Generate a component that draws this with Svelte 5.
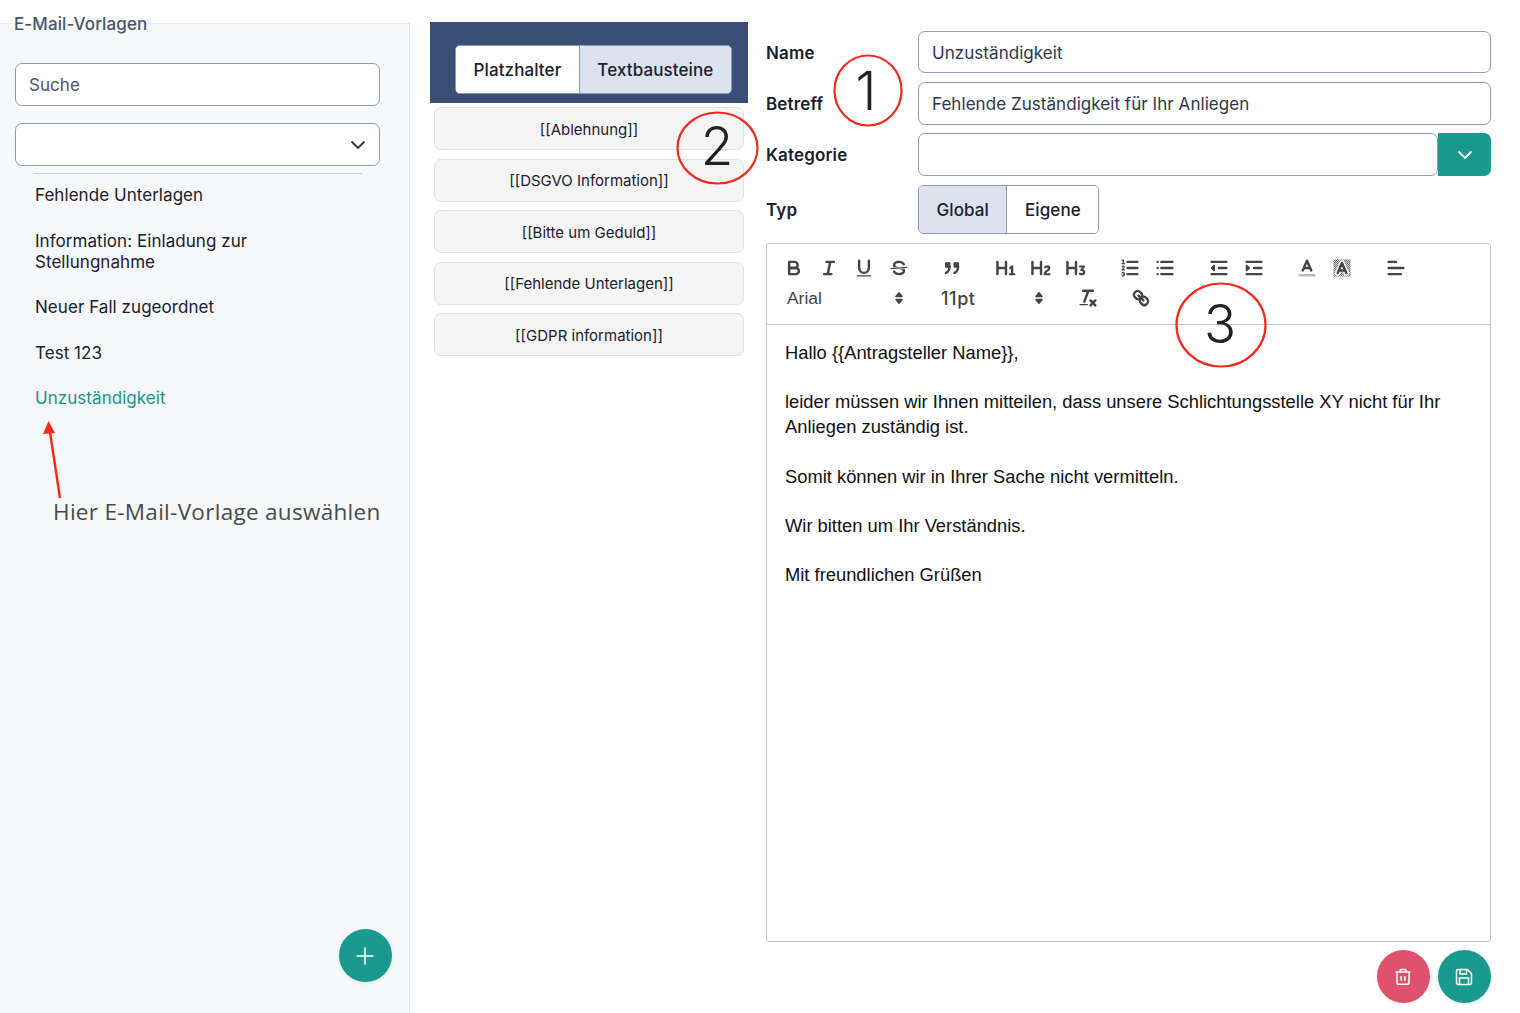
<script lang="ts">
	const templates = [
		'Fehlende Unterlagen',
		'Information: Einladung zur Stellungnahme',
		'Neuer Fall zugeordnet',
		'Test 123',
		'Unzuständigkeit'
	];
	const snippets = [
		'[[Ablehnung]]',
		'[[DSGVO Information]]',
		'[[Bitte um Geduld]]',
		'[[Fehlende Unterlagen]]',
		'[[GDPR information]]'
	];

	let active = $state('Unzuständigkeit');
	let tab = $state('Textbausteine');
	let scope = $state('Global');
</script>

<main class="page">
	<fieldset class="sidebar">
		<legend>E-Mail-Vorlagen</legend>
		<input class="field search" placeholder="Suche" />
		<div class="field select">
			<svg class="chev" viewBox="0 0 16 10" width="16" height="10"><path d="M1.5 1.5 8 8l6.5-6.5" /></svg>
		</div>
		<hr />
		<ul>
			{#each templates as item}
				<li class:active={active === item}>
					<button type="button" onclick={() => (active = item)}>{item}</button>
				</li>
			{/each}
		</ul>
		<button class="fab teal add" type="button" aria-label="Neu">
			<svg viewBox="0 0 20 20" width="20" height="20"><path d="M10 1.5v17M1.5 10h17" /></svg>
		</button>
	</fieldset>

	<section class="middle">
		<div class="tabs-head">
			<div class="segmented">
				{#each ['Platzhalter', 'Textbausteine'] as name}
					<button type="button" class:on={tab === name} onclick={() => (tab = name)}>{name}</button>
				{/each}
			</div>
		</div>
		<div class="snippets">
			{#each snippets as item}
				<button type="button" class="snippet">{item}</button>
			{/each}
		</div>
	</section>

	<section class="detail">
		<div class="form-row"><span class="label">Name</span><input class="field" value="Unzuständigkeit" /></div>
		<div class="form-row tall"><span class="label">Betreff</span><input class="field" value="Fehlende Zuständigkeit für Ihr Anliegen" /></div>
		<div class="form-row tall">
			<span class="label">Kategorie</span>
			<div class="combo">
				<div class="field"></div>
				<button type="button" class="combo-btn" aria-label="Auswahl">
					<svg viewBox="0 0 16 10" width="16" height="10"><path d="M1.5 1.5 8 8l6.5-6.5" /></svg>
				</button>
			</div>
		</div>
		<div class="form-row type">
			<span class="label">Typ</span>
			<div class="segmented small">
				{#each ['Global', 'Eigene'] as name}
					<button type="button" class:on={scope === name} onclick={() => (scope = name)}>{name}</button>
				{/each}
			</div>
		</div>

		<div class="editor">
			<div class="toolbar">
				<div class="tool-row">
					<div class="group">
						<button type="button" aria-label="Fett"><svg viewBox="0 0 18 18"><path d="M5,4H9.5A2.5,2.5,0,0,1,12,6.5v0A2.5,2.5,0,0,1,9.5,9H5V4Z" /><path d="M5,9h5.5A2.5,2.5,0,0,1,13,11.5v0A2.5,2.5,0,0,1,10.5,14H5V9Z" /></svg></button>
						<button type="button" aria-label="Kursiv"><svg viewBox="0 0 18 18"><path d="M7 4h6M5 14h6M8 14l2-10" /></svg></button>
						<button type="button" aria-label="Unterstrichen"><svg viewBox="0 0 18 18"><path d="M5,3V9a4.012,4.012,0,0,0,4,4H9a4.012,4.012,0,0,0,4-4V3" /><rect class="fill" height="1" rx="0.5" width="12" x="3" y="15" /></svg></button>
						<button type="button" aria-label="Durchgestrichen"><svg viewBox="0 0 18 18"><path class="thin" d="M15.5 8.5 2.5 9.5" /><path class="fill" d="M9.007,8C6.542,7.791,6,7.519,6,6.5,6,5.792,7.283,5,9,5c1.571,0,2.765.679,2.969,1.309a1,1,0,0,0,1.9-.617C13.356,4.106,11.354,3,9,3,6.2,3,4,4.538,4,6.5a3.2,3.2,0,0,0,.5,1.843Z" /><path class="fill" d="M8.984,10C11.457,10.208,12,10.479,12,11.5c0,.708-1.283,1.5-3,1.5-1.571,0-2.765-.679-2.969-1.309a1,1,0,1,0-1.9.617C4.644,13.894,6.646,15,9,15c2.8,0,5-1.538,5-3.5a3.2,3.2,0,0,0-.5-1.843Z" /></svg></button>
					</div>
					<div class="group">
						<button type="button" aria-label="Zitat"><svg viewBox="0 0 18 18"><rect class="solid" height="3" width="3" x="4" y="5" /><rect class="solid" height="3" width="3" x="11" y="5" /><path d="M7,8c0,4.031-3,5-3,5" /><path d="M14,8c0,4.031-3,5-3,5" /></svg></button>
					</div>
					<div class="group">
						<button type="button" aria-label="H1"><svg viewBox="0 0 18 18"><path class="fill" d="M10,4V14a1,1,0,0,1-2,0V10H3v4a1,1,0,0,1-2,0V4A1,1,0,0,1,3,4V8H8V4a1,1,0,0,1,2,0Zm6.06787,9.209H14.98975V7.59863a.54085.54085,0,0,0-.605-.60547h-.62744a1.01119,1.01119,0,0,0-.748.29688L11.645,8.56641a.5435.5435,0,0,0-.022.8584l.28613.30762a.53861.53861,0,0,0,.84717.0332l.09912-.08789a1.2137,1.2137,0,0,0,.2417-.35254h.02246s-.01123.30859-.01123.60547V13.209H12.041a.54085.54085,0,0,0-.605.60547v.43945a.54085.54085,0,0,0,.605.60547h4.02686a.54085.54085,0,0,0,.605-.60547v-.43945A.54085.54085,0,0,0,16.06787,13.209Z" /></svg></button>
						<button type="button" aria-label="H2"><svg viewBox="0 0 18 18"><path class="fill" d="M16.73975,13.81445v.43945a.54085.54085,0,0,1-.605.60547H11.855a.58392.58392,0,0,1-.64893-.60547V14.0127c0-2.90527,3.39941-3.42187,3.39941-4.55469a.77675.77675,0,0,0-.84717-.78125,1.17684,1.17684,0,0,0-.83594.38477c-.2749.26367-.561.374-.85791.13184l-.4292-.34082c-.30811-.24219-.38525-.51758-.1543-.81445a2.97155,2.97155,0,0,1,2.45361-1.17676,2.45393,2.45393,0,0,1,2.68408,2.40918c0,2.45312-3.1792,2.92676-3.27832,3.93848h2.79443A.54085.54085,0,0,1,16.73975,13.81445ZM9,3A.99974.99974,0,0,0,8,4V8H3V4A1,1,0,0,0,1,4V14a1,1,0,0,0,2,0V10H8v4a1,1,0,0,0,2,0V4A.99974.99974,0,0,0,9,3Z" /></svg></button>
						<button type="button" aria-label="H3"><svg viewBox="0 0 18 18"><path class="fill" d="M16.65186,12.30664a2.6742,2.6742,0,0,1-2.915,2.68457,3.96592,3.96592,0,0,1-2.25537-.6709.56007.56007,0,0,1-.13232-.83594L11.64648,13c.209-.34082.48389-.36328.82471-.1543a2.32654,2.32654,0,0,0,1.12256.33008c.71484,0,1.12207-.35156,1.12207-.78125,0-.61523-.61621-.86816-1.46338-.86816H13.2085a.65159.65159,0,0,1-.68213-.41895l-.05518-.10937a.67114.67114,0,0,1,.14307-.78125l.71533-.86914a8.55289,8.55289,0,0,1,.68213-.7373V8.58887a3.93913,3.93913,0,0,1-.748.05469H11.9873a.54085.54085,0,0,1-.605-.60547V7.59863a.54085.54085,0,0,1,.605-.60547h3.75146a.53773.53773,0,0,1,.60547.59375v.17676a1.03723,1.03723,0,0,1-.27539.748L14.74854,10.0293A2.31132,2.31132,0,0,1,16.65186,12.30664ZM9,3A.99974.99974,0,0,0,8,4V8H3V4A1,1,0,0,0,1,4V14a1,1,0,0,0,2,0V10H8v4a1,1,0,0,0,2,0V4A.99974.99974,0,0,0,9,3Z" /></svg></button>
					</div>
					<div class="group">
						<button type="button" aria-label="Nummerierte Liste"><svg viewBox="0 0 18 18"><path d="M7 4h8M7 9h8M7 14h8" /><path class="thin" d="M2.5 5.5h2" /><path class="fill" d="M3.5,6A0.5,0.5,0,0,1,3,5.5V3.085l-0.276.138A0.5,0.5,0,0,1,2.053,3c-0.124-.247-0.023-0.324.224-0.447l1-.5A0.5,0.5,0,0,1,4,2.5v3A0.5,0.5,0,0,1,3.5,6Z" /><path class="thin" d="M4.5,10.5h-2c0-.234,1.85-1.076,1.85-2.234A0.959,0.959,0,0,0,2.5,8.156" /><path class="thin" d="M2.5,14.846a0.959,0.959,0,0,0,1.85-.109A0.7,0.7,0,0,0,3.75,14a0.688,0.688,0,0,0,.6-0.736,0.959,0.959,0,0,0-1.85-.109" /></svg></button>
						<button type="button" aria-label="Liste"><svg viewBox="0 0 18 18"><path d="M6 4h9M6 9h9M6 14h9M3 4h0M3 9h0M3 14h0" /></svg></button>
					</div>
					<div class="group">
						<button type="button" aria-label="Ausrücken"><svg viewBox="0 0 18 18"><path d="M3 14h12M3 4h12M9 9h6" /><polygon class="solid" points="5 7 5 11 3 9 5 7" /></svg></button>
						<button type="button" aria-label="Einrücken"><svg viewBox="0 0 18 18"><path d="M3 14h12M3 4h12M9 9h6" /><polygon class="solid" points="3 7 3 11 5 9 3 7" /></svg></button>
					</div>
					<div class="group">
						<button type="button" aria-label="Textfarbe"><svg viewBox="0 0 18 18"><path class="label-line" d="M3 15h12" /><path d="M5.5 11 9 3l3.5 8M11.63 9H6.38" /></svg></button>
						<button type="button" aria-label="Hintergrund"><svg viewBox="0 0 18 18"><defs><pattern id="hatch" width="1.640" height="1.640" patternUnits="userSpaceOnUse"><rect class="fill" width="0.820" height="0.820" /><rect class="fill" x="0.820" y="0.820" width="0.820" height="0.820" /></pattern></defs><rect class="hatch" x="2" y="2" width="14" height="14" /><path class="halo" d="M5.5 13 9 5l3.5 8" /><path d="M5.500 13 9 5l3.500 8M11.630 11H6.380" /></svg></button>
					</div>
					<div class="group">
						<button type="button" aria-label="Ausrichtung"><svg viewBox="0 0 18 18"><path d="M3 9h12M3 14h10M3 4h6" /></svg></button>
					</div>
				</div>
				<div class="tool-row">
					<div class="picker font">Arial<svg viewBox="0 0 8 14" width="8" height="14"><path class="solid" d="M4 1.800 7 5.500H1zM4 12.200 1 8.500h6z" /></svg></div>
					<div class="picker size">11pt<svg viewBox="0 0 8 14" width="8" height="14"><path class="solid" d="M4 1.800 7 5.500H1zM4 12.200 1 8.500h6z" /></svg></div>
					<div class="group">
						<button type="button" aria-label="Formatierung entfernen"><svg viewBox="0 0 18 18"><path d="M5 3h8M6 12 9.350 3M11 11l4 4M15 11l-4 4" /><rect class="fill" height="1" rx="0.5" width="7" x="2" y="14" /></svg></button>
					</div>
					<div class="group">
						<button type="button" aria-label="Link"><svg viewBox="0 0 18 18"><path d="M7 7l4 4" /><path d="M8.9,4.577a3.476,3.476,0,0,1,.36,4.679A3.476,3.476,0,0,1,4.577,8.9C3.185,7.5,2.035,6.4,4.217,4.217S7.5,3.185,8.9,4.577Z" /><path d="M13.423,9.1a3.476,3.476,0,0,0-4.679-.36,3.476,3.476,0,0,0,.36,4.679c1.392,1.392,2.5,2.542,4.679.36S14.815,10.5,13.423,9.1Z" /></svg></button>
					</div>
				</div>
			</div>
			<div class="content">
				<p>Hallo {'{{'}Antragsteller Name{'}}'},</p>
				<p><br /></p>
				<p>leider müssen wir Ihnen mitteilen, dass unsere Schlichtungsstelle XY nicht für Ihr Anliegen zuständig ist.</p>
				<p><br /></p>
				<p>Somit können wir in Ihrer Sache nicht vermitteln.</p>
				<p><br /></p>
				<p>Wir bitten um Ihr Verständnis.</p>
				<p><br /></p>
				<p>Mit freundlichen Grüßen</p>
			</div>
		</div>

		<div class="actions">
			<button class="fab red" type="button" aria-label="Löschen">
				<svg viewBox="0 0 18 18" width="18" height="18"><path d="M1.500 4h15M6 4V2.600c0-.6.4-1 1-1h4c.6 0 1 .4 1 1V4M3 4v10.500c0 1 .7 1.800 1.800 1.800h8.400c1.100 0 1.800-.8 1.800-1.800V4M7.200 8v4.800M10.800 8v4.800" /></svg>
			</button>
			<button class="fab teal" type="button" aria-label="Speichern">
				<svg viewBox="0 0 18 18" width="18" height="18"><path d="M3 1.500h9.500l4 4v9c0 1.100-.8 2-2 2h-11c-1.200 0-2-.9-2-2v-11c0-1.100.8-2 1.500-2zM5 1.500v4.500h6.500v-4.500M4.500 16.500v-6.500h9v6.500" /></svg>
			</button>
		</div>
	</section>

	<svg class="marks" viewBox="0 0 1520 1013" width="1520" height="1013">
		<ellipse cx="868" cy="90.500" rx="33.500" ry="35" />
		<text x="866" y="110" class="num">1</text>
		<ellipse cx="717.500" cy="148" rx="40" ry="35.500" />
		<text x="717" y="165" class="num">2</text>
		<ellipse cx="1221" cy="325" rx="44.500" ry="41.500" />
		<text x="1220" y="343" class="num">3</text>
		<path d="M60 498 50 432" />
		<polygon points="48.500,421 43,434 55,433" />
		<text x="53" y="520" class="hint">Hier E-Mail-Vorlage auswählen</text>
	</svg>
</main>

<style>
	:global(body) {
		margin: 0;
		background: #fff;
		color: #1a202c;
		font-family: Inter, "Noto Sans", sans-serif;
	}

	.page {
		position: relative;
		display: grid;
		grid-template-columns: 410px 338px 743px;
		height: 1013px;
		overflow: hidden;
	}

	button {
		font: inherit;
		color: inherit;
		cursor: pointer;
	}

	.sidebar {
		position: relative;
		box-sizing: border-box;
		min-width: 0;
		height: 1003px;
		margin: 10px 0 0;
		padding: 27px 29px 0 15px;
		border: 0;
		border-top: 1px solid #e6e9ee;
		border-right: 1px solid #e6e9ee;
		background: #f7f8fa;
	}

	legend {
		margin-left: -1px;
		padding: 2px 0 0;
		font-size: 17px;
		line-height: 24px;
		font-weight: 500;
		letter-spacing: 0.1px;
		color: #4a5568;
	}

	.field {
		box-sizing: border-box;
		display: block;
		width: 100%;
		height: 43px;
		padding: 1px 13px 0;
		border: 1px solid #8a99b5;
		border-radius: 7px;
		background: #fff;
		font: inherit;
		font-size: 17px;
		letter-spacing: 0.05px;
		color: #2d3748;
		outline: none;
	}

	.search::placeholder {
		color: #4a5568;
		opacity: 1;
	}

	.select {
		position: relative;
		margin-top: 17px;
	}

	.chev {
		position: absolute;
		right: 13px;
		top: 16px;
	}

	.chev path,
	.combo-btn path {
		fill: none;
		stroke: #2d3748;
		stroke-width: 1.8;
	}

	hr {
		margin: 7px 18px 0;
		border: 0;
		border-top: 1px solid #cbd0d8;
	}

	ul {
		list-style: none;
		margin: -1px 0 0;
		padding: 0 0 0 20px;
	}

	li button {
		display: block;
		width: 250px;
		padding: 12.250px 0;
		border: 0;
		background: none;
		text-align: left;
		font-size: 17px;
		line-height: 21px;
		letter-spacing: 0.05px;
		color: #1a202c;
	}

	li.active button {
		color: #18958a;
	}

	.fab {
		display: flex;
		align-items: center;
		justify-content: center;
		width: 53px;
		height: 53px;
		padding: 0;
		border: 0;
		border-radius: 50%;
		box-shadow: 0 1px 4px rgba(0, 0, 0, 0.08);
	}

	.fab svg {
		margin-left: -1px;
		fill: none;
		stroke: #fff;
		stroke-width: 1.500;
	}

	.teal {
		background: #1a9a8f;
	}

	.red {
		background: #e0526c;
	}

	.add {
		position: absolute;
		right: 17px;
		bottom: 31px;
	}

	.middle {
		padding: 22px 0 0 20px;
	}

	.tabs-head {
		display: flex;
		height: 81px;
		box-sizing: border-box;
		padding: 23px 0 0 25px;
		background: #3a4f74;
	}

	.segmented {
		display: flex;
		height: 49px;
		box-sizing: border-box;
		border: 1px solid #8a99b5;
		border-radius: 5px;
		overflow: hidden;
		background: #fff;
	}

	.segmented button {
		padding: 0 17.500px;
		border: 0;
		background: #fff;
		font-size: 17px;
		font-weight: 500;
		letter-spacing: 0.1px;
		color: #1a202c;
	}

	.segmented button + button {
		border-left: 1px solid #8a99b5;
	}

	.segmented button.on {
		background: #dde3ee;
	}

	.snippets {
		display: flex;
		flex-direction: column;
		gap: 8.500px;
		padding: 4px 4px 0;
	}

	.snippet {
		box-sizing: border-box;
		height: 43px;
		padding: 1px 0 0;
		border: 1px solid #e0e0e0;
		border-radius: 7px;
		background: #f5f5f5;
		font-size: 15px;
		color: #1a202c;
	}

	.detail {
		display: flex;
		flex-direction: column;
		padding: 31px 0 0 18px;
		box-sizing: border-box;
		width: 743px;
	}

	.form-row {
		display: flex;
		align-items: center;
		height: 42px;
	}

	.form-row.tall {
		height: 43px;
		margin-top: 8.500px;
	}

	.form-row.type {
		height: 49px;
		margin-top: 9px;
	}

	.form-row .field {
		height: 100%;
		padding-top: 2px;
	}

	.label {
		flex: 0 0 152px;
		padding-top: 1px;
		font-size: 17px;
		font-weight: 600;
		letter-spacing: 0.15px;
		color: #1a202c;
	}

	.combo {
		display: flex;
		flex: 1;
		height: 100%;
	}

	.combo-btn {
		flex: 0 0 53px;
		display: flex;
		align-items: center;
		justify-content: center;
		padding: 0;
		border: 0;
		border-radius: 0 7px 7px 0;
		background: #1a9a8f;
	}

	.combo-btn path {
		stroke: #fff;
	}

	.editor {
		box-sizing: border-box;
		height: 699px;
		margin-top: 9px;
		border: 1px solid #c4c4c4;
		border-radius: 3px;
	}

	.toolbar {
		box-sizing: border-box;
		height: 81px;
		padding: 9px 0 0 9px;
		border-bottom: 1px solid #c4c4c4;
	}

	.tool-row {
		display: flex;
		height: 30px;
		color: #444;
	}

	.group {
		display: flex;
		margin-right: 18.750px;
	}

	.group button {
		display: flex;
		align-items: center;
		justify-content: center;
		width: 35px;
		height: 30px;
		padding: 0;
		border: 0;
		background: none;
	}

	.group svg {
		width: 22px;
		height: 22px;
		fill: none;
		stroke: #444;
		stroke-width: 2;
		stroke-linecap: round;
		stroke-linejoin: round;
	}

	.group .thin {
		stroke-width: 1;
	}

	.group .fill {
		fill: #444;
		stroke: none;
	}

	.group .solid,
	.picker .solid {
		fill: #444;
		stroke: #444;
		stroke-width: 1.500;
		stroke-linejoin: round;
	}

	.group .label-line {
		stroke: #bbb;
	}

	.group .hatch {
		fill: url(#hatch);
		stroke: none;
	}

	.group .halo {
		stroke: #fff;
		stroke-width: 4.500;
	}

	.picker {
		display: flex;
		align-items: center;
		justify-content: space-between;
		box-sizing: border-box;
		height: 30px;
		padding-left: 11px;
		font-size: 18px;
		font-weight: 500;
		letter-spacing: 0.6px;
		color: #444;
	}

	.picker.font {
		width: 127px;
		margin-right: 27px;
		font-family: "Liberation Sans", Arial, sans-serif;
		font-size: 17.400px;
		font-weight: 400;
		letter-spacing: 0;
	}

	.picker.size {
		width: 113px;
		margin-right: 27px;
	}

	.content {
		padding: 16px 18px 0;
		font-family: "Liberation Sans", Arial, sans-serif;
		font-size: 18.350px;
		line-height: 24.700px;
		color: #111;
	}

	.content p {
		margin: 0;
	}

	.actions {
		display: flex;
		justify-content: flex-end;
		gap: 8px;
		margin-top: 8px;
	}

	.marks {
		position: absolute;
		left: 0;
		top: 0;
		pointer-events: none;
	}

	.marks ellipse {
		fill: none;
		stroke: #f5281c;
		stroke-width: 2.200;
	}

	.marks path {
		stroke: #f5281c;
		stroke-width: 2.400;
		fill: none;
	}

	.marks polygon {
		fill: #f5281c;
	}

	.num {
		font-family: Inter, "Liberation Sans", sans-serif;
		font-size: 53px;
		font-weight: 350;
		text-anchor: middle;
		fill: #222;
	}

	.hint {
		font-family: "Open Sans", sans-serif;
		font-size: 22.500px;
		letter-spacing: 0.3px;
		fill: #4a4a4a;
	}
</style>
